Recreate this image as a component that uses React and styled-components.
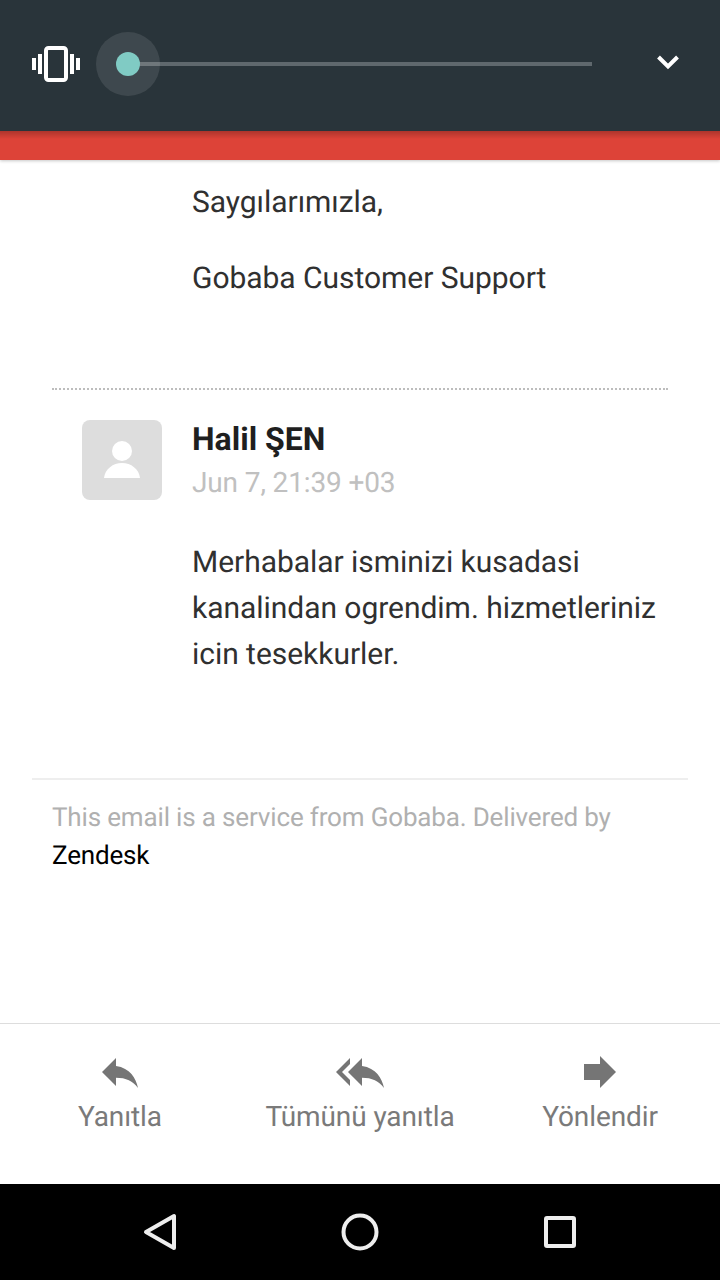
import React from "react";
import styled, { createGlobalStyle } from "styled-components";

const Global = createGlobalStyle`
  html, body { margin: 0; padding: 0; background: #fff; }
  body { font-family: Roboto, "Noto Sans", sans-serif; text-rendering: geometricPrecision; }
`;

const Screen = styled.div`
  width: 720px;
  height: 1280px;
  display: flex;
  flex-direction: column;
  overflow: hidden;
  background: #fff;
`;

const Volume = styled.header`
  height: 131px;
  flex: none;
  background: #29343a;
  display: flex;
  align-items: center;
  padding: 0 32px 3px;
  box-sizing: border-box;
  position: relative;
  z-index: 2;
`;

const Slider = styled.div`
  position: relative;
  width: 464px;
  height: 4px;
  margin-left: 48px;
  background: #5f686d;
`;

const Halo = styled.div`
  position: absolute;
  left: -32px;
  top: -30px;
  width: 64px;
  height: 64px;
  border-radius: 50%;
  background: rgba(255, 255, 255, 0.1);
  display: flex;
  align-items: center;
  justify-content: center;
`;

const Thumb = styled.div`
  width: 24px;
  height: 24px;
  border-radius: 50%;
  background: #80cbc4;
`;

const Chevron = styled.svg`
  margin-left: auto;
  margin-right: 8px;
  margin-bottom: 4px;
  display: block;
`;

const RedBar = styled.div`
  height: 29px;
  flex: none;
  background: #dd4338;
  background-image: linear-gradient(rgba(0,0,0,.22), rgba(0,0,0,0) 8px);
  box-shadow: 0 1px 3px rgba(0,0,0,.22);
  position: relative;
  z-index: 1;
`;

const Mail = styled.main`
  flex: 1;
  display: flex;
  flex-direction: column;
`;

const Body = styled.p`
  margin: 0;
  padding-left: 192px;
  padding-right: 60px;
  font-size: 30px;
  line-height: 46px;
  letter-spacing: -0.04px;
  color: #303030;
`;

const Signature = styled.div`
  padding-top: 20px;
  display: flex;
  flex-direction: column;
  gap: 30px;
`;

const Dotted = styled.div`
  margin: 86px 52px 0;
  border-top: 2px dotted #bdbdbd;
`;

const Comment = styled.section`
  display: flex;
  gap: 30px;
  padding: 30px 0 0 82px;
`;

const Avatar = styled.div`
  width: 80px;
  height: 80px;
  flex: none;
  border-radius: 8px;
  background: #dddddd;
  display: flex;
  align-items: center;
  justify-content: center;
`;

const Meta = styled.div`
  display: flex;
  flex-direction: column;
`;

const Name = styled.div`
  font-size: 32px;
  font-weight: 700;
  line-height: 38px;
  color: #1f1f1f;
`;

const DateLine = styled.div`
  font-size: 28px;
  line-height: 46px;
  margin-top: 2px;
  letter-spacing: -0.13px;
  color: #c0c0c0;
`;

const Message = styled(Body)`
  padding-top: 34px;
`;

const Footer = styled.footer`
  margin: 100px 32px 0;
  padding: 19px 20px 0;
  border-top: 2px solid #eeeeee;
  font-size: 26px;
  line-height: 38px;
  letter-spacing: -0.16px;
  color: #b0b0b0;
`;

const Dark = styled.span`
  display: block;
  color: #000;
`;

const Actions = styled.nav`
  height: 161px;
  flex: none;
  box-sizing: border-box;
  border-top: 1px solid #ddd;
  display: grid;
  grid-template-columns: repeat(3, 240px);
  padding-top: 24px;
`;

const Action = styled.div`
  display: flex;
  flex-direction: column;
  align-items: center;
  font-size: 28px;
  line-height: 40px;
  letter-spacing: -0.1px;
  color: #7a7a7a;
  white-space: nowrap;
`;

const ActionIcon = styled.svg`
  display: block;
  fill: #757575;
  margin-bottom: 1px;
`;

const SystemBar = styled.div`
  height: 96px;
  flex: none;
  background: #000;
  display: grid;
  grid-template-columns: repeat(3, 200px);
  justify-content: center;
  align-items: center;
  justify-items: center;
`;

const SysIcon = styled.svg`
  display: block;
  fill: none;
  stroke: #eeeeee;
  stroke-width: 4;
  stroke-linejoin: round;
`;

const Icon24 = ({ d }) => (
  <ActionIcon width="48" height="48" viewBox="0 0 24 24"><path d={d} /></ActionIcon>
);

export default function App() {
  return (
    <Screen>
      <Global />
      <Volume>
        <svg width="48" height="36" viewBox="0 0 48 36" style={{ display: "block", flex: "none" }}>
          <rect x="14" y="2" width="20" height="32" rx="2.5" fill="none" stroke="#fff" strokeWidth="4" />
          <path fill="#fff" d="M0 12h4v12H0zM6 8h4v20H6zM38 8h4v20h-4zM44 12h4v12h-4z" />
        </svg>
        <Slider>
          <Halo><Thumb /></Halo>
        </Slider>
        <Chevron width="24" height="16" viewBox="0 0 24 16">
          <path d="M2.5 3 12 12.5 21.5 3" fill="none" stroke="#fff" strokeWidth="4" />
        </Chevron>
      </Volume>
      <RedBar />
      <Mail>
        <Signature>
          <Body>Saygılarımızla,</Body>
          <Body>Gobaba Customer Support</Body>
        </Signature>
        <Dotted />
        <Comment>
          <Avatar>
            <svg width="40" height="40" viewBox="0 0 40 40">
              <circle cx="20" cy="11" r="10" fill="#fff" />
              <path d="M2 38c1-9 9-15 18-15s17 6 18 15z" fill="#fff" />
            </svg>
          </Avatar>
          <Meta>
            <Name>Halil ŞEN</Name>
            <DateLine>Jun 7, 21:39 +03</DateLine>
          </Meta>
        </Comment>
        <Message>Merhabalar isminizi kusadasi kanalindan ogrendim. hizmetleriniz icin tesekkurler.</Message>
        <Footer>
          This email is a service from Gobaba. Delivered by
          <Dark>Zendesk</Dark>
        </Footer>
      </Mail>
      <Actions>
        <Action>
          <Icon24 d="M10 9V5l-7 7 7 7v-4.1c5 0 8.5 1.6 11 5.1-1-5-4-10-11-11z" />
          Yanıtla
        </Action>
        <Action>
          <Icon24 d="M7 8V5l-7 7 7 7v-3l-4-4 4-4zm6 1V5l-7 7 7 7v-4.1c5 0 8.5 1.6 11 5.1-1-5-4-10-11-11z" />
          Tümünü yanıtla
        </Action>
        <Action>
          <Icon24 d="M12 8V4l8 8-8 8v-4H4V8z" />
          Yönlendir
        </Action>
      </Actions>
      <SystemBar>
        <SysIcon width="34" height="38" viewBox="0 0 34 38">
          <path d="M3 19 31 3v32z" />
        </SysIcon>
        <SysIcon width="38" height="38" viewBox="0 0 38 38">
          <circle cx="19" cy="19" r="16.5" />
        </SysIcon>
        <SysIcon width="32" height="32" viewBox="0 0 32 32">
          <rect x="2" y="2" width="28" height="28" rx="1" />
        </SysIcon>
      </SystemBar>
    </Screen>
  );
}
